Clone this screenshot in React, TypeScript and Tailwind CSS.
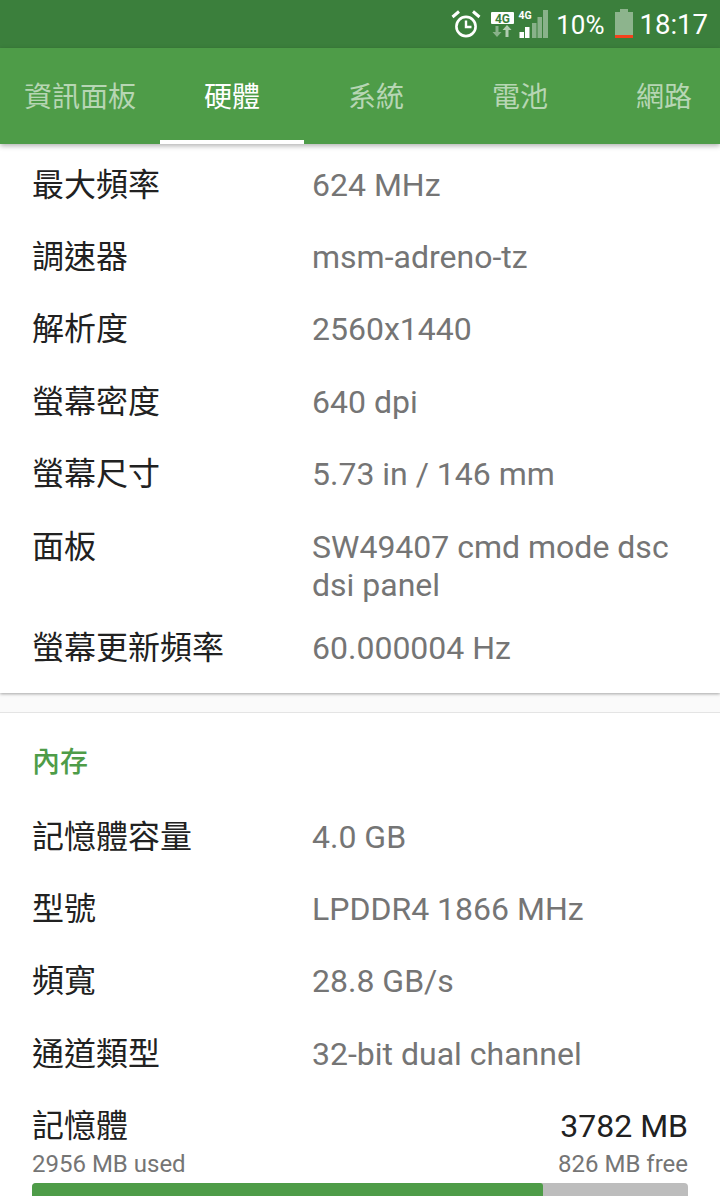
import React from "react";

function Row({ label, value }: { label: string; value: React.ReactNode }) {
  return (
    <div className="flex min-h-[72.4px] pl-[32px] pr-[32px] pt-[17.6px] pb-[8px]">
      <div className="w-[280px] shrink-0 text-[32px] leading-[38px] text-[#212121]">{label}</div>
      <div className="flex-1 text-[32px] leading-[38px] text-[#757575]">{value}</div>
    </div>
  );
}

function Alarm() {
  return (
    <svg width="30" height="30" viewBox="0 0 30 30" fill="none" className="shrink-0">
      <circle cx="15" cy="17.5" r="9.6" stroke="#fff" strokeWidth="2.6" />
      <path d="M15 11.5v6.5h5.5" stroke="#fff" strokeWidth="2.4" />
      <path d="M1.5 8l6.5-5.5M28.5 8L22 2.5" stroke="#fff" strokeWidth="3" />
    </svg>
  );
}

function NetIcon() {
  return (
    <svg width="57" height="30" viewBox="0 0 57 30" className="shrink-0">
      <rect x="0" y="3" width="23" height="12" fill="#fff" rx="1" />
      <text x="11.5" y="13.5" textAnchor="middle" fontSize="12" fontWeight="700" fill="#3b7f3c" fontFamily="Roboto">4G</text>
      <path d="M6 28l-4.5-5h3v-6h3v6h3z" fill="#fff" fillOpacity="0.4" />
      <path d="M16 16l4.5 5h-3v7h-3v-7h-3z" fill="#fff" fillOpacity="0.6" />
      <text x="34" y="10" textAnchor="middle" fontSize="10.5" fontWeight="700" fill="#fff" fontFamily="Roboto">4G</text>
      <rect x="28.5" y="23" width="4.5" height="6" fill="#fff" />
      <rect x="34" y="18" width="4.5" height="11" fill="#fff" />
      <rect x="41" y="14" width="4.5" height="15" fill="#fff" fillOpacity="0.4" />
      <rect x="46.5" y="8" width="4.5" height="21" fill="#fff" fillOpacity="0.4" />
      <rect x="52" y="1" width="5" height="28" fill="#fff" fillOpacity="0.4" />
    </svg>
  );
}

function Battery() {
  return (
    <svg width="20" height="30" viewBox="0 0 20 30" className="shrink-0">
      <path d="M6 0h8v3h5v26H1V3h5z" fill="#fff" fillOpacity="0.42" />
      <rect x="1" y="26" width="18" height="3" fill="#f4421c" />
    </svg>
  );
}

const tabs = [
  { t: "資訊面板", w: "w-[160px]" },
  { t: "硬體", w: "w-[144px]", active: true },
  { t: "系統", w: "w-[144px]" },
  { t: "電池", w: "w-[144px]" },
  { t: "網路", w: "w-[144px]" },
];

export default function App() {
  return (
    <div
      className="relative flex h-[1196px] w-[720px] flex-col overflow-hidden bg-[#fafafa]"
      style={{ fontFamily: '"Roboto", "Noto Sans CJK TC", sans-serif' }}
    >
      <div className="flex h-[48px] shrink-0 items-center justify-end bg-[#3b7f3c] pr-[12px] text-white">
        <Alarm />
        <div className="ml-[10px]"><NetIcon /></div>
        <span className="ml-[8px] pt-[2px] text-[26px] leading-none">10%</span>
        <div className="ml-[9px]"><Battery /></div>
        <span className="ml-[6px] pt-[2px] text-[27.5px] leading-none">18:17</span>
      </div>
      <div className="relative z-10 flex h-[96px] shrink-0 bg-[#4e9c48] shadow-[0_2px_5px_rgba(0,0,0,0.3)]">
        {tabs.map((x) => (
          <div
            key={x.t}
            className={`relative flex ${x.w} shrink-0 items-center justify-center pt-[3px] text-[28px] ${
              x.active ? "text-white" : "text-white/60"
            }`}
          >
            {x.t}
            {x.active && <div className="absolute inset-x-0 bottom-0 h-[4px] bg-white" />}
          </div>
        ))}
      </div>

      <div className="flex flex-col bg-white pt-[4px] pb-[9px] shadow-[0_1px_3px_rgba(0,0,0,0.35)]">
        <Row label="最大頻率" value="624 MHz" />
        <Row label="調速器" value="msm-adreno-tz" />
        <Row label="解析度" value="2560x1440" />
        <Row label="螢幕密度" value="640 dpi" />
        <Row label="螢幕尺寸" value="5.73 in / 146 mm" />
        <Row label="面板" value={<>SW49407 cmd mode dsc<br />dsi panel</>} />
        <Row label="螢幕更新頻率" value="60.000004 Hz" />
      </div>

      <div className="mt-[19px] flex flex-1 flex-col border-t border-[#e4e4e4] bg-white">
        <div className="h-[87px] pl-[32px] pt-[31px] text-[28px] leading-[38px] font-medium text-[#4e9c48]">內存</div>
        <Row label="記憶體容量" value="4.0 GB" />
        <Row label="型號" value="LPDDR4 1866 MHz" />
        <Row label="頻寬" value="28.8 GB/s" />
        <Row label="通道類型" value="32-bit dual channel" />
        <div className="px-[32px] pt-[17px]">
          <div className="flex justify-between text-[32px] leading-[38px] text-[#212121]">
            <span>記憶體</span>
            <span>3782 MB</span>
          </div>
          <div className="mt-[3px] flex justify-between text-[24px] leading-[32px] text-[#757575]">
            <span>2956 MB used</span>
            <span>826 MB free</span>
          </div>
          <div className="mt-[3px] h-[20px] overflow-hidden rounded-[4px] bg-[#bdbdbd]">
            <div className="h-full w-[511px] rounded-r-[3px] bg-[#4e9c48]" />
          </div>
        </div>
      </div>
    </div>
  );
}
